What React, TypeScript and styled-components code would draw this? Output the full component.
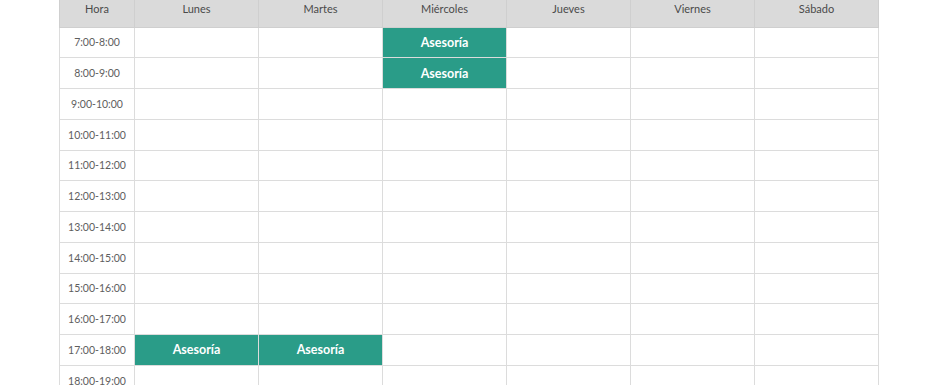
import * as React from "react";
import styled, { createGlobalStyle } from "styled-components";

const GlobalStyle = createGlobalStyle`
  html, body {
    margin: 0;
    padding: 0;
    background: #ffffff;
    overflow: hidden;
  }
  body {
    font-family: Lato, "Noto Sans", sans-serif;
  }
`;

const Page = styled.div`
  width: 945px;
  height: 385px;
  overflow: hidden;
`;

const Schedule = styled.table`
  margin: -10px 0 0 59px;
  border-collapse: collapse;
  table-layout: fixed;
  width: 820px;
`;

const HeadCell = styled.th<{ $narrow?: boolean }>`
  width: ${(p) => (p.$narrow ? "74px" : "123px")};
  height: 36.5px;
  padding: 0;
  background: #dadada;
  border: 1px solid #cfcfcf;
  border-top: none;
  color: #4a4a4a;
  font-size: 11px;
  font-weight: 400;
  text-align: center;
  vertical-align: middle;
`;

const HourCell = styled.td`
  height: 29.75px;
  padding: 0;
  border: 1px solid #dcdcdc;
  color: #5e5e5e;
  font-size: 10.5px;
  text-align: center;
  vertical-align: middle;
`;

const SlotCell = styled.td<{ $booked?: boolean }>`
  padding: 0;
  border: 1px solid #dcdcdc;
  background: ${(p) => (p.$booked ? "#2a9c88" : "#ffffff")};
  color: #ffffff;
  font-size: 12.5px;
  font-weight: 700;
  text-align: center;
  vertical-align: middle;
`;

const days = ["Lunes", "Martes", "Miércoles", "Jueves", "Viernes", "Sábado"];

const hours = Array.from({ length: 14 }, (_, i) => 7 + i);

// booked slots: hour -> day indexes
const booked: Record<number, number[]> = {
  7: [2],
  8: [2],
  17: [0, 1],
};

export default function App() {
  return (
    <Page>
      <GlobalStyle />
      <Schedule>
        <thead>
          <tr>
            <HeadCell $narrow>Hora</HeadCell>
            {days.map((d) => (
              <HeadCell key={d}>{d}</HeadCell>
            ))}
          </tr>
        </thead>
        <tbody>
          {hours.map((h) => (
            <tr key={h}>
              <HourCell>
                {h}:00-{h + 1}:00
              </HourCell>
              {days.map((d, i) => {
                const isBooked = (booked[h] || []).includes(i);
                return (
                  <SlotCell key={d} $booked={isBooked}>
                    {isBooked ? "Asesoría" : ""}
                  </SlotCell>
                );
              })}
            </tr>
          ))}
        </tbody>
      </Schedule>
    </Page>
  );
}
